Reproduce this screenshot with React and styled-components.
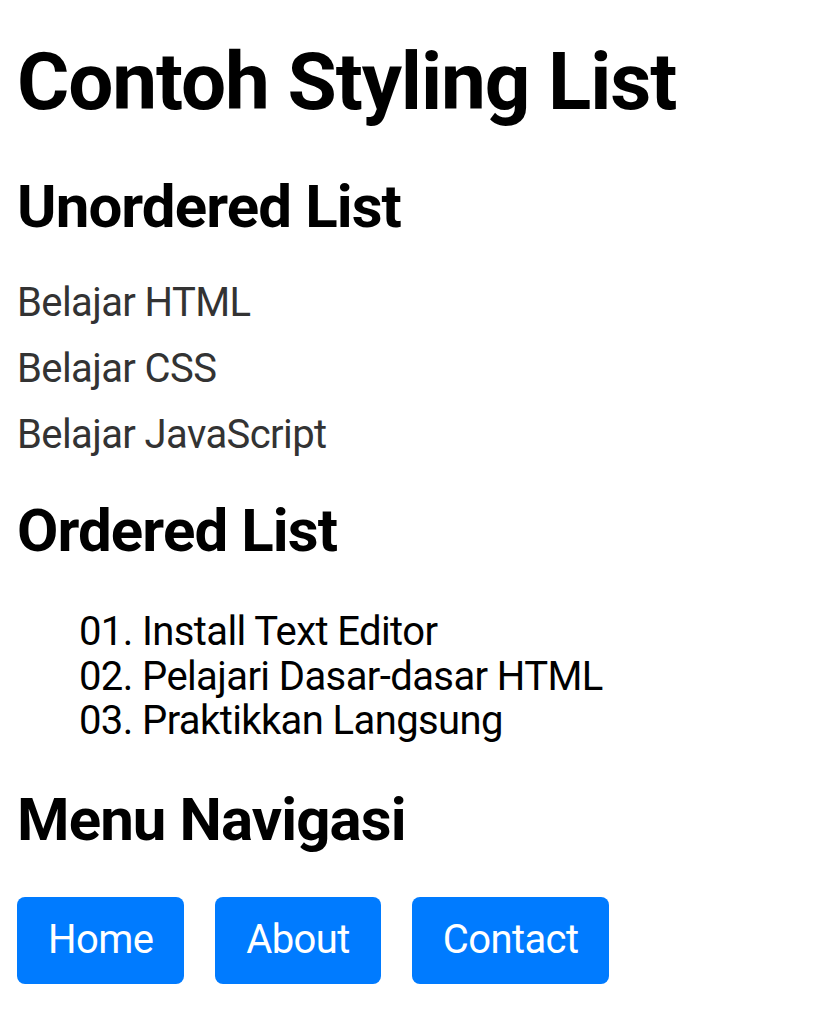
import React from "react";
import styled, { createGlobalStyle } from "styled-components";

const GlobalStyle = createGlobalStyle`
  html, body {
    margin: 0;
    padding: 0;
    background: #ffffff;
  }
  body {
    font-family: Roboto, "Liberation Sans", Arial, sans-serif;
    color: #000;
  }
`;

const Page = styled.main`
  padding: 34px 17px 0;
  display: flex;
  flex-direction: column;
`;

const Title = styled.h1`
  margin: 0;
  font-size: 80px;
  line-height: 96px;
  font-weight: 700;
  letter-spacing: -1.1px;
  color: #000;
`;

const Heading = styled.h2`
  margin: ${(p) => p.$top}px 0 0;
  font-size: 60px;
  line-height: 72px;
  font-weight: 700;
  letter-spacing: -0.9px;
  color: #000;
`;

const PlainList = styled.ul`
  list-style: none;
  margin: 27px 0 0;
  padding: 0;
`;

const PlainItem = styled.li`
  font-size: 40px;
  line-height: 66px;
  letter-spacing: -0.6px;
  color: #333;
`;

const NumberList = styled.ol`
  list-style: decimal-leading-zero outside;
  margin: 43px 0 0;
  padding-left: 125px;
`;

const NumberItem = styled.li`
  font-size: 40px;
  line-height: 44.5px;
  letter-spacing: -0.6px;
  color: #000;
`;

const Nav = styled.nav`
  display: flex;
  gap: 31px;
  margin-top: 41px;
`;

const NavButton = styled.a`
  display: inline-block;
  background: #007bff;
  color: #fff;
  text-decoration: none;
  font-size: 40px;
  line-height: 46px;
  letter-spacing: -0.6px;
  padding: 20px 31px 21px;
  border-radius: 8px;
`;

export default function App() {
  return (
    <>
      <GlobalStyle />
      <Page>
        <Title>Contoh Styling List</Title>

        <Heading $top={41}>Unordered List</Heading>
        <PlainList>
          <PlainItem>Belajar HTML</PlainItem>
          <PlainItem>Belajar CSS</PlainItem>
          <PlainItem>Belajar JavaScript</PlainItem>
        </PlainList>

        <Heading $top={27}>Ordered List</Heading>
        <NumberList>
          <NumberItem>Install Text Editor</NumberItem>
          <NumberItem>Pelajari Dasar-dasar HTML</NumberItem>
          <NumberItem>Praktikkan Langsung</NumberItem>
        </NumberList>

        <Heading $top={40}>Menu Navigasi</Heading>
        <Nav>
          <NavButton href="#">Home</NavButton>
          <NavButton href="#">About</NavButton>
          <NavButton href="#">Contact</NavButton>
        </Nav>
      </Page>
    </>
  );
}
